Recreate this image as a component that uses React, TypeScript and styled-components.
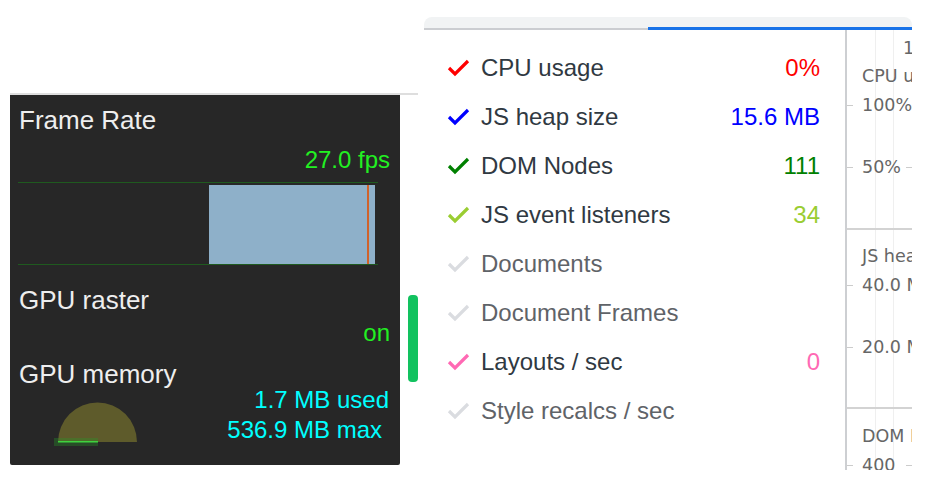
import styled, { createGlobalStyle } from "styled-components";

const GlobalStyle = createGlobalStyle`
  html, body {
    margin: 0;
    padding: 0;
    background: #ffffff;
  }
  body {
    font-family: "Liberation Sans", Arial, sans-serif;
  }
`;

const Page = styled.div`
  width: 936px;
  height: 496px;
  display: flex;
  align-items: flex-start;
  overflow: hidden;
`;

/* ---------- left: rendering HUD ---------- */

const LeftCol = styled.div`
  margin: 93px 0 0 10px;
  width: 408px;
  border-top: 2px solid #dedede;
  display: flex;
  align-items: flex-start;
`;

const Hud = styled.div`
  width: 392px;
  height: 370px;
  box-sizing: border-box;
  background: #272727;
  border-radius: 0 0 2px 2px;
  padding: 10px 10px 0 9px;
  display: flex;
  flex-direction: column;
`;

const HudTitle = styled.div<{ $gap?: number }>`
  margin-top: ${(p) => p.$gap ?? 0}px;
  color: #eeeeee;
  font-size: 26px;
  line-height: 30px;
`;

const HudValue = styled.div<{ $color: string; $gap?: number; $inset?: number }>`
  margin-top: ${(p) => p.$gap ?? 0}px;
  padding-right: ${(p) => p.$inset ?? 0}px;
  color: ${(p) => p.$color};
  font-size: 24px;
  line-height: 30px;
  text-align: right;
`;

const FrameGraph = styled.svg`
  display: block;
  margin: 7px 0 0 -1px;
`;

const MemoryRow = styled.div`
  display: flex;
  align-items: flex-start;
`;

const Gauge = styled.svg`
  display: block;
  margin: 11px 0 0 31px;
`;

const MemoryText = styled.div`
  flex: 1;
  display: flex;
  flex-direction: column;
`;

const MemLine = styled.div<{ $gap?: number; $inset?: number }>`
  margin-top: ${(p) => p.$gap ?? 0}px;
  padding-right: ${(p) => p.$inset ?? 1}px;
  color: #00ffff;
  font-size: 24px;
  line-height: 22px;
  text-align: right;
`;

const Thumb = styled.div`
  margin: 200px 0 0 8px;
  width: 10px;
  height: 87px;
  border-radius: 4px;
  background: #12c25f;
`;

/* ---------- right: performance monitor ---------- */

const Monitor = styled.div`
  margin: 17px 0 0 6px;
  width: 488px;
  overflow: hidden;
`;

const TabStrip = styled.div`
  height: 13px;
  background: #f1f3f4;
  border-radius: 8px 8px 0 0;
  display: flex;
  flex-direction: column;
  justify-content: flex-end;
`;

const Underline = styled.div`
  height: 3px;
  display: flex;
  align-items: flex-end;
`;

const Track = styled.div`
  flex: 1;
  height: 2px;
  background: #cbcdd1;
`;

const ActiveTab = styled.div`
  width: 264px;
  height: 3px;
  background: #1a73e8;
`;

const Body = styled.div`
  height: 440px;
  display: flex;
  overflow: hidden;
`;

const MetricList = styled.div`
  width: 421px;
  box-sizing: border-box;
  padding: 13px 25px 0 23px;
  display: flex;
  flex-direction: column;
`;

const MetricRow = styled.div`
  height: 49px;
  display: flex;
  align-items: center;
`;

const Check = styled.svg`
  flex: none;
  width: 24px;
  height: 20px;
  margin-right: 10px;
`;

const MetricLabel = styled.span<{ $on: boolean }>`
  flex: 1;
  font-size: 24px;
  color: ${(p) => (p.$on ? "#303942" : "#5f6368")};
  white-space: nowrap;
`;

const MetricValue = styled.span<{ $color: string }>`
  font-size: 24px;
  color: ${(p) => p.$color};
`;

const ChartCol = styled.div`
  flex: 1;
  border-left: 2px solid #cdcfd2;
  overflow: hidden;
  background-image: linear-gradient(#efefef, #efefef),
    linear-gradient(#efefef, #efefef);
  background-size: 1px 100%;
  background-position: 28px 0, 46px 0;
  background-repeat: no-repeat;
  font-family: "DejaVu Sans", Verdana, sans-serif;
  font-size: 17.5px;
  color: #666666;
`;

const ChartSection = styled.div<{ $h: number; $pad: number; $first?: boolean }>`
  height: ${(p) => p.$h}px;
  box-sizing: border-box;
  padding-top: ${(p) => p.$pad}px;
  border-top: ${(p) => (p.$first ? "none" : "2px solid #d3d3d3")};
`;

const Ruler = styled.div`
  line-height: 28px;
  padding-left: 56px;
  white-space: nowrap;
`;

const ChartTitle = styled.div`
  line-height: 28px;
  padding-left: 15px;
  white-space: nowrap;
`;

const TickRow = styled.div`
  height: 30px;
  display: flex;
  align-items: center;
  white-space: nowrap;
  & + & {
    margin-top: 32px;
  }
`;

const Tick = styled.span<{ $right?: boolean }>`
  flex: none;
  width: 6px;
  height: 1px;
  background: #cccccc;
  margin: ${(p) => (p.$right ? "0 0 0 auto" : "0 9px 0 0")};
`;

type Metric = {
  label: string;
  color: string;
  on: boolean;
  value?: string;
};

const metrics: Metric[] = [
  { label: "CPU usage", color: "#ff0000", on: true, value: "0%" },
  { label: "JS heap size", color: "#0000ff", on: true, value: "15.6 MB" },
  { label: "DOM Nodes", color: "#008000", on: true, value: "111" },
  { label: "JS event listeners", color: "#9acd32", on: true, value: "34" },
  { label: "Documents", color: "#dadce0", on: false },
  { label: "Document Frames", color: "#dadce0", on: false },
  { label: "Layouts / sec", color: "#ff69b4", on: true, value: "0" },
  { label: "Style recalcs / sec", color: "#dadce0", on: false },
];

function CheckMark({ color }: { color: string }) {
  return (
    <Check viewBox="0 0 24 20">
      <polyline
        points="2,10 8,16 21,3"
        fill="none"
        stroke={color}
        strokeWidth="3.2"
      />
    </Check>
  );
}

type Tk = { text: string; right?: boolean };

function Section({
  title,
  ticks,
  h,
  pad,
  first,
  ruler,
}: {
  title: string;
  ticks: Tk[];
  h: number;
  pad: number;
  first?: boolean;
  ruler?: string;
}) {
  return (
    <ChartSection $h={h} $pad={pad} $first={first}>
      {ruler && <Ruler>{ruler}</Ruler>}
      <ChartTitle>{title}</ChartTitle>
      {ticks.map((t) => (
        <TickRow key={t.text}>
          <Tick />
          {t.text}
          {t.right && <Tick $right />}
        </TickRow>
      ))}
    </ChartSection>
  );
}

export default function App() {
  return (
    <>
      <GlobalStyle />
      <Page>
        <LeftCol>
          <Hud>
            <HudTitle>Frame Rate</HudTitle>
            <HudValue $color="#22f022" $gap={10}>
              27.0 fps
            </HudValue>
            <FrameGraph width="360" height="83" viewBox="0 0 360 83">
              <rect x="0" y="0" width="360" height="1" fill="#1f5a1f" />
              <rect x="0" y="82" width="360" height="1" fill="#1f5a1f" />
              <rect x="191" y="3" width="166" height="79" fill="#8eb0c9" />
              <rect x="349" y="3" width="2" height="79" fill="#d0622a" />
            </FrameGraph>
            <HudTitle $gap={20}>GPU raster</HudTitle>
            <HudValue $color="#22f022" $gap={3}>
              on
            </HudValue>
            <HudTitle $gap={11}>GPU memory</HudTitle>
            <MemoryRow>
              <Gauge width="90" height="48" viewBox="0 0 90 48">
                <path d="M8 42 A39.5 39.5 0 0 1 87 42 Z" fill="#5e5b2b" />
                <rect x="4" y="38" width="44" height="8" fill="rgba(40,150,40,0.35)" />
                <rect x="8" y="41" width="40" height="1.5" fill="#3fd23f" />
              </Gauge>
              <MemoryText>
                <MemLine>1.7 MB used</MemLine>
                <MemLine $gap={8} $inset={8}>
                  536.9 MB max
                </MemLine>
              </MemoryText>
            </MemoryRow>
          </Hud>
          <Thumb />
        </LeftCol>

        <Monitor>
          <TabStrip>
            <Underline>
              <Track />
              <ActiveTab />
            </Underline>
          </TabStrip>
          <Body>
            <MetricList>
              {metrics.map((m) => (
                <MetricRow key={m.label}>
                  <CheckMark color={m.color} />
                  <MetricLabel $on={m.on}>{m.label}</MetricLabel>
                  {m.value && <MetricValue $color={m.color}>{m.value}</MetricValue>}
                </MetricRow>
              ))}
            </MetricList>
            <ChartCol>
              <Section
                first
                h={198}
                pad={4}
                ruler="10 sec"
                title="CPU usage"
                ticks={[{ text: "100%" }, { text: "50%", right: true }]}
              />
              <Section
                h={179}
                pad={12}
                title="JS heap size"
                ticks={[{ text: "40.0 MB" }, { text: "20.0 MB" }]}
              />
              <Section
                h={200}
                pad={13}
                title="DOM Nodes"
                ticks={[{ text: "400", right: true }, { text: "200" }]}
              />
            </ChartCol>
          </Body>
        </Monitor>
      </Page>
    </>
  );
}
